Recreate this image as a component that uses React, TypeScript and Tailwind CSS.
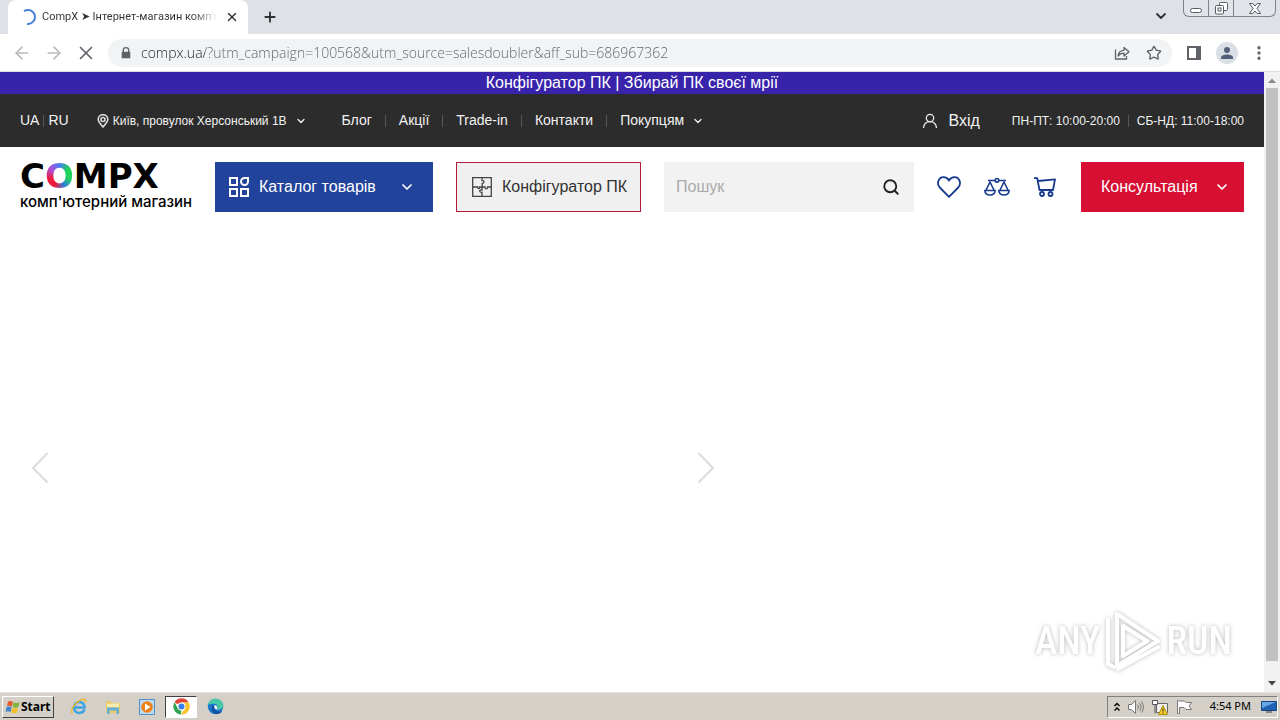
import type { ReactNode } from "react";
import { Plus, X, ArrowLeft, ArrowRight, ChevronDown, Star, Search, EllipsisVertical } from "lucide-react";

function Divider() {
  return <span className="h-3 w-px bg-[#565656]" aria-hidden="true" />;
}

function TabStrip() {
  return (
    <div className="flex h-[34px] items-end bg-[#dee1e6] pl-2">
      <div className="flex h-[34px] w-60 items-center gap-1.5 rounded-t-lg bg-white pr-2 pl-3">
        <svg viewBox="0 0 16 16" className="size-4 shrink-0" fill="none" stroke="#4a82d8" strokeWidth="2">
          <path d="M4 2.200A7 7 0 1 1 7 14.900" />
        </svg>
        <span className="min-w-0 flex-1 overflow-hidden bg-linear-to-r from-[#303236] from-85% to-transparent bg-clip-text font-[Roboto] text-[11px] whitespace-nowrap text-transparent">
          CompX ➤ Інтернет-магазин комп'н
        </span>
        <button aria-label="Close tab" className="flex size-4 items-center justify-center">
          <X className="size-3.5 text-[#303236]" strokeWidth={2.4} />
        </button>
      </div>
      <button aria-label="New tab" className="flex h-[34px] w-11 items-center justify-center">
        <Plus className="size-4 text-[#303236]" strokeWidth={2.8} />
      </button>
      <div className="ml-auto flex h-[34px] items-start gap-3">
        <button aria-label="Search tabs" className="mt-1.5 flex size-5 items-center justify-center">
          <ChevronDown className="size-4 text-[#303236]" strokeWidth={2.800} />
        </button>
        <div className="mr-1 flex h-[17px] w-[93px] rounded-b-md border border-t-0 border-[#7d828c] bg-[#e1e4e9]">
          <button aria-label="Minimize" className="flex w-[25px] items-end justify-center border-r border-[#7d828c] pb-[3px]">
            <span className="h-[5px] w-3 rounded-sm border border-[#555a63] bg-white" />
          </button>
          <button aria-label="Restore" className="flex w-[25px] items-center justify-center border-r border-[#7d828c]">
            <svg viewBox="0 0 13 13" className="size-[13px]" fill="#fff" stroke="#555a63">
              <rect x="4.5" y=".5" width="8" height="8" rx="1" />
              <rect x=".5" y="3.5" width="8" height="8.5" rx="1" />
              <rect x="3" y="6" width="3" height="3" />
            </svg>
          </button>
          <button aria-label="Close" className="flex flex-1 items-center justify-center">
            <svg viewBox="0 0 12 11" className="h-[11px] w-3" fill="#fff" stroke="#555a63">
              <path d="M.5.5h3.3L6 3 8.2.5h3.3L8 5.5l3.5 5H8.2L6 8l-2.2 2.5H.5l3.500-5z" />
            </svg>
          </button>
        </div>
      </div>
    </div>
  );
}

function Toolbar() {
  return (
    <div className="flex h-[38px] items-center border-b border-[#dadce0] bg-white pl-3 text-[#5f6368]">
      <div className="flex gap-3">
        <button aria-label="Back" className="flex size-5 items-center justify-center">
          <ArrowLeft className="size-5 shrink-0 text-[#b9bbbe]" />
        </button>
        <button aria-label="Forward" className="flex size-5 items-center justify-center">
          <ArrowRight className="size-5 shrink-0 text-[#b9bbbe]" />
        </button>
        <button aria-label="Stop" className="flex size-5 items-center justify-center">
          <X className="size-[22px] shrink-0" strokeWidth={1.800} />
        </button>
      </div>
      <div className="ml-3 flex h-7 flex-1 items-center rounded-full bg-[#f1f3f4] pr-2 pl-3">
        <svg viewBox="0 0 12 14" className="h-3 w-3" fill="#5f6368">
          <path d="M2 5.500V4a4 4 0 0 1 8 0v1.500h1V13H1V5.500zM3.600 5.500h4.800V4a2.400 2.400 0 0 0-4.800 0z" />
        </svg>
        <input
          aria-label="Address"
          className="ml-[9px] min-w-0 flex-1 bg-linear-to-r from-[#202124] from-[64px] to-[#5f6368] to-[64px] bg-clip-text font-['Open_Sans'] text-[14px] font-light text-transparent outline-none"
          defaultValue="compx.ua/?utm_campaign=100568&utm_source=salesdoubler&aff_sub=686967362"
        />
        <button aria-label="Share" className="mr-3 flex size-5 items-center justify-center">
          <svg viewBox="0 0 16 16" className="size-4" fill="none" stroke="currentColor" strokeWidth="1.300">
            <path d="M1.500 4.500v9.500h11v-3" />
            <path d="M4 11c.6-3.800 2.800-5.700 6-5.700V2.500l5 4.300-5 4.200V8.200C7.500 8.200 5.500 9 4 11z" strokeLinejoin="round" />
          </svg>
        </button>
        <button aria-label="Bookmark" className="flex size-5 items-center justify-center">
          <Star className="size-4" />
        </button>
      </div>
      <div className="flex items-center gap-3 pr-3 pl-3">
        <button aria-label="Side panel" className="flex size-5 items-center justify-center">
          <svg viewBox="0 0 14 14" className="size-3.5">
            <path fill="currentColor" fillRule="evenodd" d="M0 0h14v14H0zM2 2v10h7V2z" />
          </svg>
        </button>
        <button aria-label="Profile" className="flex size-[22px] items-center justify-center rounded-full bg-[#dadfe6]">
          <svg viewBox="0 0 14 14" className="size-3.5" fill="#55617b">
            <circle cx="7" cy="4" r="3" />
            <path d="M1 13v-1.500C1 9.500 4 8.500 7 8.500s6 1 6 3V13z" />
          </svg>
        </button>
        <button aria-label="Menu" className="flex w-[18px] items-center justify-center">
          <EllipsisVertical className="size-[18px]" strokeWidth={2.4} />
        </button>
      </div>
    </div>
  );
}

function TopBar() {
  return (
    <div className="flex h-[53px] items-center bg-[#2c2c2c] px-5 text-[14px] text-[#f2f2f2]">
      <div className="flex items-center gap-1">
        <a href="#ua">UA</a>
        <Divider />
        <a href="#ru">RU</a>
      </div>
      <button className="ml-7 flex items-center gap-1 text-[12px]">
        <svg viewBox="0 0 12 14" className="h-3.5 w-3" fill="none" stroke="#ddd" strokeWidth="1.600">
          <path d="M6 13C3 9.500 1.200 7.500 1.200 5.500a4.800 4.800 0 0 1 9.600 0C10.800 7.500 9 9.500 6 13z" />
          <circle cx="6" cy="5.500" r="2" />
        </svg>
        Київ, провулок Херсонський 1В
        <ChevronDown className="ml-1 size-3" strokeWidth={2.600} />
      </button>
      <nav className="ml-[35px] flex items-center gap-[13px]">
        <a href="#blog">Блог</a>
        <Divider />
        <a href="#sales">Акції</a>
        <Divider />
        <a href="#trade-in">Trade-in</a>
        <Divider />
        <a href="#contacts">Контакти</a>
        <Divider />
        <button className="flex items-center gap-2">
          Покупцям
          <ChevronDown className="size-3" strokeWidth={2.600} />
        </button>
      </nav>
      <a href="#login" className="ml-auto flex items-center gap-2.5 text-[16px]">
        <svg viewBox="0 0 16 16" className="size-4" fill="none" stroke="currentColor" strokeWidth="1.200">
          <circle cx="8" cy="5" r="3.700" />
          <path d="M1.500 15c.4-4 3-6.300 6.500-6.300s6.100 2.300 6.500 6.300" />
        </svg>
        Вхід
      </a>
      <div className="ml-8 flex items-center gap-2 text-[12px]">
        <span>ПН-ПТ: 10:00-20:00</span>
        <Divider />
        <span>СБ-НД: 11:00-18:00</span>
      </div>
    </div>
  );
}

function IconLink({ label, children }: { label: string; children: ReactNode }) {
  return (
    <a href="#shop" aria-label={label} className="flex size-7 items-center justify-center text-[#173a8f]">
      {children}
    </a>
  );
}

function Header() {
  return (
    <header className="flex items-start px-5 pt-[15px] text-[16px]">
      <a href="#home" className="flex w-[195px] shrink-0 flex-col gap-1 text-black">
        <span className="font-['DejaVu_Sans'] text-[34px] leading-7 font-bold">
          C
          <span className="bg-[conic-gradient(#4a7bf0,#22d35a,#22d35a,#2d7fe0,#ec1c3c,#ec1c3c,#b04fd8,#4a7bf0)] bg-clip-text text-transparent">O</span>
          MPX
        </span>
        <span className="font-[Inter] text-[15px] leading-4 font-medium whitespace-nowrap">комп'ютерний магазин</span>
      </a>
      <button className="flex h-[50px] w-[218px] items-center bg-[#22439c] px-3.5 text-white">
        <svg viewBox="0 0 20 20" className="size-5" fill="none" stroke="currentColor" strokeWidth="2">
          <path d="M1 1h7v7H1zM1 12h7v7H1zM12 12h7v7h-7zM19 1v3.500a3.500 3.500 0 1 1-3.500-3.500z" />
        </svg>
        <span className="ml-2.5 flex-1 text-left">Каталог товарів</span>
        <ChevronDown className="mr-1 size-4" strokeWidth={2.6} />
      </button>
      <a href="#configurator" className="ml-[23px] flex h-[50px] w-[185px] items-center gap-2.5 border border-[#b31b3a] bg-[#f0f0f0] px-[15px] whitespace-nowrap text-[#333]">
        <svg viewBox="0 0 20 20" className="size-5 shrink-0" fill="none" stroke="#444" strokeWidth="1.300">
          <path d="M.7.7h18.600v18.600H.7zM10 .7v2.800c2.500-.5 2.700 3 .2 2.800V10M.7 10h5c-.6 2 2.600 2 2 0H13c-.6 2.500 3 2.500 2.600 0h3.700M10 10v3c-3-.8-3.200 2.700 0 2.300v4" />
        </svg>
        Конфігуратор ПК
      </a>
      <form className="ml-[23px] flex h-[50px] min-w-0 flex-1 items-center bg-[#f2f2f2] pr-3.5 pl-3" role="search">
        <input aria-label="Пошук" placeholder="Пошук" className="min-w-0 flex-1 bg-transparent outline-none placeholder:text-[#aaa]" />
        <button type="button" aria-label="Шукати">
          <Search className="size-[18px] text-[#222]" strokeWidth={2.500} />
        </button>
      </form>
      <div className="flex h-[50px] items-center gap-5 pr-[22px] pl-[21px]">
        <IconLink label="Обране">
          <svg viewBox="0 0 24 22" className="h-[22px] w-6" fill="none" stroke="currentColor" strokeWidth="1.800" strokeLinejoin="round">
            <path d="M12 20.800 2.800 11.500C-.8 7.500 1.500 1.200 6.500 1.200c2.500 0 4.500 1.500 5.500 3.300 1-1.800 3-3.300 5.500-3.300 5 0 7.300 6.300 3.700 10.300z" />
          </svg>
        </IconLink>
        <IconLink label="Порівняння">
          <svg viewBox="0 0 26 20" className="h-5 w-[26px]" fill="none" stroke="currentColor" strokeWidth="1.600" strokeLinejoin="round">
            <path d="M4 3.500h7M15 3.500h7M6 5 1.800 13.500h8.400zM20 5l-4.200 8.500h8.400zM.8 13.500h10.400c-.3 3-2 4.500-5.200 4.500S1.100 16.500.8 13.500zM14.800 13.500h10.400c-.3 3-2 4.500-5.200 4.500s-4.900-1.500-5.200-4.500z" />
            <circle cx="13" cy="3.300" r="1.800" />
          </svg>
        </IconLink>
        <IconLink label="Кошик">
          <svg viewBox="0 0 22 20" className="h-5 w-[22px]" fill="none" stroke="currentColor" strokeWidth="1.800" strokeLinejoin="round">
            <path d="M0 1.200h3.200L5.500 13H19L21 2.400 4 4" />
            <circle cx="8" cy="17" r="2" />
            <circle cx="16.500" cy="17" r="2" />
          </svg>
        </IconLink>
      </div>
      <button className="flex h-[50px] w-[163px] items-center justify-between bg-[#d60f33] pr-3.5 pl-5 text-white">
        Консультація
        <ChevronDown className="size-4" strokeWidth={2.600} />
      </button>
    </header>
  );
}

function Carousel() {
  return (
    <div className="mt-[236px] flex w-[59%] items-center justify-between px-7">
      <button aria-label="Назад" className="h-10 w-6">
        <svg viewBox="0 0 24 40" fill="none" stroke="#dcdcdc" strokeWidth="2">
          <path d="M19.500 5 5 20l14.500 14.500" />
        </svg>
      </button>
      <button aria-label="Вперед" className="h-10 w-6">
        <svg viewBox="0 0 24 40" fill="none" stroke="#dcdcdc" strokeWidth="2">
          <path d="M4.500 5 19 20 4.500 34.500" />
        </svg>
      </button>
    </div>
  );
}

function Watermark() {
  return (
    <div className="absolute right-8 bottom-5 flex items-center gap-1 font-['Liberation_Sans_Narrow','Roboto_Condensed',Roboto] text-[38px] leading-[60px] font-medium text-white drop-shadow-[0_0_2px_#b8b8b8]">
      <span>ANY</span>
      <svg viewBox="0 0 58 62" className="h-[62px] w-[58px]" fill="none" stroke="#fff" strokeWidth="4" strokeLinejoin="round" strokeLinecap="round">
        <path d="M4 10v44l6 3M13 4v52L54 31zM19 16v30l24-15zM14 59l40-22" />
      </svg>
      <span>RUN</span>
    </div>
  );
}

function Scrollbar() {
  return (
    <div className="flex w-4 shrink-0 flex-col items-center bg-[#f1f1f1]" aria-hidden="true">
      <svg viewBox="0 0 16 16" className="size-4" fill="#8a8a8a"><path d="M4 11h8L8 6.500z" /></svg>
      <div className="w-3 flex-1 bg-[#c1c1c1]" />
      <svg viewBox="0 0 16 31" className="h-[31px] w-4" fill="#444"><path d="M4 20h8l-4 4.500z" /></svg>
    </div>
  );
}

function Taskbar() {
  return (
    <footer className="flex h-7 items-center border-t border-[#e8e6e0] bg-[#d4d0c8] px-0.5 text-[11px] text-black">
      <button className="flex h-[22px] w-[52px] items-center border border-t-white border-r-[#404040] border-b-[#404040] border-l-white pl-0.5 font-bold">
        <svg viewBox="0 0 16 16" className="size-4 shrink-0">
          <path fill="#e8592b" d="M3 2.500C5 1.500 6.500 2 8 3L6.800 7.500C5.200 6.500 3.700 6.500 2 7z" />
          <path fill="#7fb53c" d="M8.700 3.300c1.800 1 3.800 1 6 0L13.500 8c-2 1-4 1-6 0z" />
          <path fill="#3d85c8" d="M1.700 8c1.700-.8 3.300-.6 4.900.3L5.500 13c-1.600-1-3.200-1-5-.3z" />
          <path fill="#f4bd2c" d="M7.300 8.800c2 1 4 1 6 0L12 13.500c-2 1-4 1-6 0z" />
        </svg>
        <span className="font-['Noto_Sans'] text-[12px]">Start</span>
      </button>
      <div className="ml-[9px] flex items-center gap-0.5">
        <button aria-label="Internet Explorer" className="flex h-[22px] w-8 items-center justify-center">
          <svg viewBox="0 0 18 18" className="size-[18px]" fill="none">
            <path d="M14.500 11.500c-1 2.400-3 3.500-5.200 3.500C6 15 4 12.500 4 9.500S6 4 9.300 4s5.400 2.300 5.200 5.500H5" stroke="#3da4e4" strokeWidth="2.600" />
            <path d="M2.500 15.500C-1 12 7 2 13.500 1.200c2.500-.2 2.500 1.800 1.500 3.500" stroke="#edb731" strokeWidth="1.500" />
          </svg>
        </button>
        <button aria-label="Explorer" className="flex h-[22px] w-8 items-center justify-center">
          <svg viewBox="0 0 18 18" className="size-[18px]">
            <path fill="#e9ca66" d="M2 3h5l1 2h8v10H2z" />
            <path fill="#f9ecb0" d="M3 5.500h12V9H3z" />
            <path fill="#67afd9" d="M3 16V9.500h12V16h-2.500v-3.500h-7V16z" />
          </svg>
        </button>
        <button aria-label="Media Player" className="flex h-[22px] w-8 items-center justify-center">
          <svg viewBox="0 0 18 18" className="size-[18px]">
            <path fill="#bddbf1" stroke="#528fc5" d="M1.500 1.500h15v15h-15z" />
            <circle cx="9" cy="9" r="5.800" fill="#f08118" />
            <path fill="#fff" d="M7 5.500v7L12.500 9z" />
          </svg>
        </button>
        <button aria-label="Chrome" className="flex h-[22px] w-8 items-center justify-center border border-t-[#404040] border-r-white border-b-white border-l-[#404040] bg-white">
          <svg viewBox="0 0 18 18" className="size-[17px]">
            <path fill="#e04435" d="M9 9 1.600 4.500a8.600 8.600 0 0 1 14.900.2H9z" />
            <path fill="#32a351" d="M9 9 5.200 11 1.600 4.500A8.600 8.600 0 0 0 8.500 17.600z" />
            <path fill="#f9c52d" d="M9 4.700h7.500a8.600 8.600 0 0 1-8 12.900L12.500 11z" />
            <circle cx="9" cy="9" r="4.200" fill="#fff" />
            <circle cx="9" cy="9" r="3.200" fill="#397ee8" />
          </svg>
        </button>
        <button aria-label="Edge" className="flex h-[22px] w-8 items-center justify-center">
          <svg viewBox="0 0 18 18" className="size-[17px]">
            <circle cx="9" cy="9" r="8.200" fill="#1877ca" />
            <path fill="#48c9a5" d="M1 7.500C2 3 5.500.8 9.200.8c5 0 8.400 4 8 8-.5 3.500-5.700 3.700-6.700 2 1-1.700.5-4.800-3-4.800C4.800 6 2.500 6.500 1 7.500z" />
            <path fill="#1350a0" d="M5.500 8c-2 4 0 8 4 9 3 .3 5.500-1.300 6.700-3.200-5 1.700-9.500-.8-8.700-5.300z" />
            <path fill="#fff" d="M8 7.800c-1.200 3 1.500 5.500 6 4.500-2-.2-3.800-.7-3.500-1.800.6-1.200-.8-3.300-2.500-2.700z" />
          </svg>
        </button>
      </div>
      <div className="ml-auto flex h-[22px] items-center gap-2 border border-t-[#808080] border-r-white border-b-white border-l-[#808080] pl-1.5">
        <svg viewBox="0 0 6 10" className="h-2.5 w-1.5" fill="none" stroke="#000" strokeWidth="1.400">
          <path d="m.5 4 2.500-2.500L5.500 4M.5 8.500 3 6l2.500 2.500" />
        </svg>
        <svg viewBox="0 0 16 14" className="h-3.5 w-4" fill="none" stroke="#777">
          <path fill="#fff" d="M.5 4.500h3l4-4v13l-4-4h-3z" />
          <path d="M9.500 4.500c1 1.500 1 3.500 0 5M11.500 3c2 2.500 2 5.500 0 8M13.500 1.500c2.500 3.500 2.500 7.500 0 11" />
        </svg>
        <svg viewBox="0 0 16 16" className="size-4">
          <path fill="#eee" stroke="#666" d="M4.500 4.500h11v9h-11z" />
          <path fill="#fff" stroke="#555" d="M.5 1.500h5v4h-5zM3 5.500v9" />
          <path fill="#f5cc27" stroke="#b1910c" d="m11 6.500 4.500 9h-9z" />
          <path stroke="#222" d="M11 9.500v3M11 13.500v1" />
        </svg>
        <svg viewBox="0 0 16 14" className="h-3.5 w-4" fill="#fff" stroke="#777">
          <path d="M1.500.5v13h2v-6H8l2 2h5.500L13 6l2.500-3.500H10L8.500 1h-5z" />
        </svg>
        <span className="ml-2.5 font-['Noto_Sans']">4:54 PM</span>
        <svg viewBox="0 0 16 14" className="ml-0.5 h-3.5 w-4">
          <path fill="#2161b4" stroke="#17457f" d="M.5 1.500h15v9H.5z" />
          <path fill="#65a6e5" d="M1 2h14L1 8z" />
          <path fill="#888" d="M5 11h6v2H5z" />
        </svg>
      </div>
    </footer>
  );
}

export default function App() {
  return (
    <div className="flex h-screen flex-col bg-white font-['Noto_Sans',sans-serif]">
      <TabStrip />
      <Toolbar />
      <div className="flex min-h-0 flex-1">
        <main className="relative min-w-0 flex-1 overflow-hidden font-['Liberation_Sans',sans-serif]">
          <a href="#configurator" className="block bg-[#3823ab] text-center text-[16px] leading-[22px] text-white">
            Конфігуратор ПК | Збирай ПК своєї мрії
          </a>
          <TopBar />
          <Header />
          <Carousel />
          <Watermark />
        </main>
        <Scrollbar />
      </div>
      <Taskbar />
    </div>
  );
}
